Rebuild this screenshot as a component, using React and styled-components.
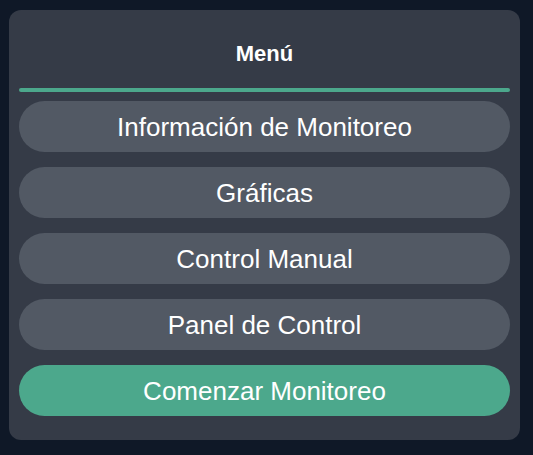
import React from "react";
import styled, { createGlobalStyle } from "styled-components";

const Global = createGlobalStyle`
  html, body {
    margin: 0;
    padding: 0;
    background: #0f1827;
    font-family: "Liberation Sans", Arial, sans-serif;
  }
`;

const Page = styled.div`
  padding: 10px 13px 15px 9px;
`;

const Panel = styled.nav`
  width: 511px;
  box-sizing: border-box;
  background: #353b47;
  border-radius: 12px;
  padding: 0 10px 24px;
  display: flex;
  flex-direction: column;
`;

const Title = styled.h2`
  margin: 0;
  padding: 31px 0 21px;
  font-size: 22px;
  line-height: 26px;
  font-weight: 700;
  color: #ffffff;
  text-align: center;
`;

const Divider = styled.div`
  height: 4px;
  border-radius: 2px;
  background: #4ca88c;
  margin-bottom: 9px;
`;

const List = styled.div`
  display: flex;
  flex-direction: column;
  gap: 15px;
`;

const MenuButton = styled.button`
  height: 51px;
  border: none;
  border-radius: 26px;
  background: ${(p) => (p.$primary ? "#4ca88c" : "#525964")};
  color: #ffffff;
  font-family: "Liberation Sans", Arial, sans-serif;
  font-size: 26px;
  line-height: 30px;
  display: flex;
  align-items: center;
  justify-content: center;
  padding: 0 16px;
  cursor: pointer;
`;

const items = [
  "Información de Monitoreo",
  "Gráficas",
  "Control Manual",
  "Panel de Control",
];

export default function App() {
  return (
    <Page>
      <Global />
      <Panel>
        <Title>Menú</Title>
        <Divider />
        <List>
          {items.map((t) => (
            <MenuButton key={t}>{t}</MenuButton>
          ))}
          <MenuButton $primary>Comenzar Monitoreo</MenuButton>
        </List>
      </Panel>
    </Page>
  );
}
